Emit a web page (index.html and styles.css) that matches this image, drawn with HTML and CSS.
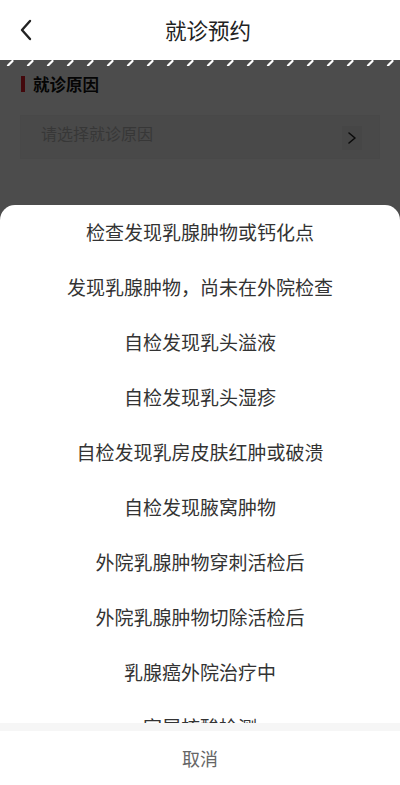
FILE: index.html
```html
<!DOCTYPE html>
<html lang="zh-CN">
<head>
<meta charset="utf-8">
<title>就诊预约</title>
<link rel="stylesheet" href="styles.css">
</head>
<body>
<div class="app">
  <header class="header">
    <span class="back">
      <svg width="14" height="22" viewBox="0 0 14 22"><path d="M11 2 L3 11 L11 20" fill="none" stroke="#222" stroke-width="2.4" stroke-linecap="round" stroke-linejoin="round"/></svg>
    </span>
    <h1 class="title">就诊预约</h1>
    <span class="spacer"></span>
  </header>
  <main class="content">
    <div class="section-title"><span class="bar"></span>就诊原因</div>
    <div class="select">
      <span class="placeholder">请选择就诊原因</span>
      <span class="arrow">
        <svg width="10" height="14" viewBox="0 0 10 14"><path d="M2 2 L8 7 L2 12" fill="none" stroke="#222" stroke-width="1.6" stroke-linecap="round" stroke-linejoin="round"/></svg>
      </span>
    </div>
  </main>
  <div class="mask">
    <svg class="marks" width="400" height="6" viewBox="0 0 400 6">
      <defs>
        <pattern id="tick" width="20" height="6" patternUnits="userSpaceOnUse">
          <path d="M8 5.5 L12.5 1" stroke="#fff" stroke-width="2.2" stroke-linecap="round"/>
        </pattern>
      </defs>
      <rect width="400" height="6" fill="url(#tick)"/>
    </svg>
  </div>
  <div class="sheet">
    <ul class="options">
      <li>检查发现乳腺肿物或钙化点</li>
      <li>发现乳腺肿物，尚未在外院检查</li>
      <li>自检发现乳头溢液</li>
      <li>自检发现乳头湿疹</li>
      <li>自检发现乳房皮肤红肿或破溃</li>
      <li>自检发现腋窝肿物</li>
      <li>外院乳腺肿物穿刺活检后</li>
      <li>外院乳腺肿物切除活检后</li>
      <li>乳腺癌外院治疗中</li>
      <li>家属核酸检测</li>
    </ul>
    <div class="divider"></div>
    <div class="cancel">取消</div>
  </div>
</div>
</body>
</html>
```

FILE: styles.css
```css
* { box-sizing: border-box; }
html, body { margin: 0; padding: 0; }
body {
  width: 400px;
  height: 785px;
  overflow: hidden;
  background: #fff;
  font-family: "Noto Sans CJK SC", "Noto Sans", sans-serif;
}
.app {
  position: relative;
  width: 400px;
  height: 785px;
  overflow: hidden;
  background: #fff;
}
.header {
  height: 60px;
  display: grid;
  grid-template-columns: 60px 1fr 60px;
  align-items: center;
  background: #fff;
}
.back {
  display: flex;
  align-items: center;
  padding-left: 19px;
  height: 100%;
}
.title {
  margin: 0;
  padding-left: 16px;
  text-align: center;
  font-size: 21.5px;
  font-weight: 400;
  color: #222;
  line-height: 60px;
}
.content {
  padding: 12px 20px 0;
}
.section-title {
  display: flex;
  align-items: center;
  gap: 8px;
  font-size: 16.5px;
  font-weight: 700;
  color: #111;
  height: 24px;
}
.bar {
  width: 4px;
  height: 16px;
  background: #e01b2a;
  margin-left: 1px;
}
.select {
  margin-top: 19px;
  height: 44px;
  background: #f4f4f4;
  border: 1px solid #f0f0f0;
  display: flex;
  align-items: center;
  justify-content: space-between;
  padding: 0 20px;
}
.placeholder {
  font-size: 16px;
  color: #bababa;
  margin-top: -8px;
}
.arrow {
  display: flex;
  align-items: center;
  justify-content: center;
  width: 20px;
  height: 24px;
  background: #eaeaea;
  margin-right: -3px;
  margin-top: 2px;
}
.mask {
  position: absolute;
  left: 0;
  right: 0;
  top: 60px;
  bottom: 0;
  background: rgba(0, 0, 0, 0.7);
}
.marks {
  display: block;
}
.sheet {
  position: absolute;
  left: 0;
  right: 0;
  top: 205px;
  bottom: 0;
  background: #fff;
  border-radius: 15px 15px 0 0;
  display: flex;
  flex-direction: column;
  overflow: hidden;
}
.options {
  list-style: none;
  margin: 0;
  padding: 0;
  flex: 1;
  overflow: hidden;
}
.options li {
  height: 55px;
  display: flex;
  align-items: center;
  justify-content: center;
  font-size: 19px;
  color: #333;
  padding-bottom: 2px;
}
.divider {
  height: 8px;
  background: #f6f6f6;
}
.cancel {
  height: 54px;
  display: flex;
  align-items: center;
  justify-content: center;
  font-size: 18px;
  color: #666;
}
```
